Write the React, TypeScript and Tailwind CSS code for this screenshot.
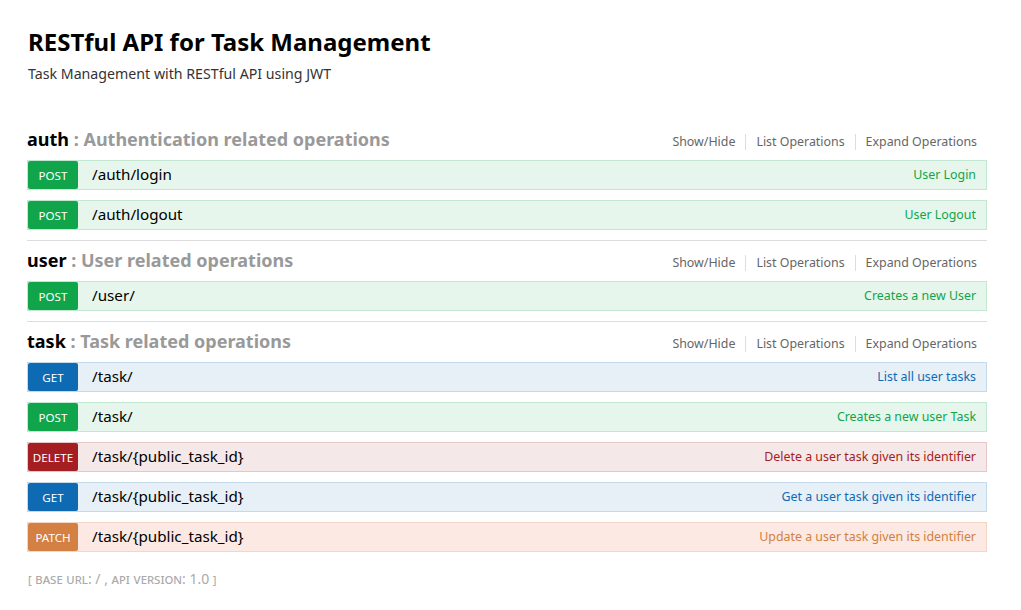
import clsx from 'clsx';

type Method = 'get' | 'post' | 'delete' | 'patch';

interface Operation {
  method: Method;
  path: string;
  summary: string;
}

interface Resource {
  name: string;
  description: string;
  operations: Operation[];
}

const resources: Resource[] = [
  {
    name: 'auth',
    description: 'Authentication related operations',
    operations: [
      { method: 'post', path: '/auth/login', summary: 'User Login' },
      { method: 'post', path: '/auth/logout', summary: 'User Logout' },
    ],
  },
  {
    name: 'user',
    description: 'User related operations',
    operations: [{ method: 'post', path: '/user/', summary: 'Creates a new User' }],
  },
  {
    name: 'task',
    description: 'Task related operations',
    operations: [
      { method: 'get', path: '/task/', summary: 'List all user tasks' },
      { method: 'post', path: '/task/', summary: 'Creates a new user Task' },
      { method: 'delete', path: '/task/{public_task_id}', summary: 'Delete a user task given its identifier' },
      { method: 'get', path: '/task/{public_task_id}', summary: 'Get a user task given its identifier' },
      { method: 'patch', path: '/task/{public_task_id}', summary: 'Update a user task given its identifier' },
    ],
  },
];

// swagger-ui 2.x method colours
const methodStyles: Record<Method, { row: string; badge: string; text: string }> = {
  get: { row: 'bg-[#e7f0f7] border-[#c3d9ec]', badge: 'bg-[#0f6ab4]', text: 'text-[#0f6ab4]' },
  post: { row: 'bg-[#e7f6ec] border-[#c3e8d1]', badge: 'bg-[#10a54a]', text: 'text-[#10a54a]' },
  delete: { row: 'bg-[#f5e8e8] border-[#e8c6c7]', badge: 'bg-[#a41e22]', text: 'text-[#a41e22]' },
  patch: { row: 'bg-[#fce9e3] border-[#f5d5c3]', badge: 'bg-[#d38042]', text: 'text-[#d38042]' },
};

function OperationRow({ op }: { op: Operation }) {
  const s = methodStyles[op.method];
  return (
    <div className={clsx('flex items-center h-[30px] border mb-[10px]', s.row)}>
      <span
        className={clsx(
          'w-[50px] h-[28px] rounded-[2px] flex items-center justify-center text-white text-[11.6px] uppercase pt-[1px]',
          s.badge
        )}
      >
        {op.method}
      </span>
      <span className="ml-[14px] text-[15.2px] text-black flex-1 pb-[2px]">{op.path}</span>
      <span className={clsx('mr-[10px] text-[12.4px]', s.text)}>{op.summary}</span>
    </div>
  );
}

function ResourceBlock({ resource, last }: { resource: Resource; last: boolean }) {
  return (
    <div className={clsx(!last && 'border-b border-[#ddd]')}>
      {/* Heading */}
      <div className="h-[40px] flex items-baseline pt-[6px]">
        <h2 className="text-[18px] font-bold leading-[26px] flex-1">
          <span className="text-black">{resource.name}</span>
          <span className="text-[#999]"> : {resource.description}</span>
        </h2>
        <ul className="flex items-baseline text-[12.4px] text-[#666] mr-[10px]">
          <li className="px-[10px] border-r border-[#ddd] leading-[16px]">Show/Hide</li>
          <li className="px-[10px] border-r border-[#ddd] leading-[16px]">List Operations</li>
          <li className="pl-[10px] leading-[16px]">Expand Operations</li>
        </ul>
      </div>
      <div>
        {resource.operations.map((op, i) => (
          <OperationRow key={i} op={op} />
        ))}
      </div>
    </div>
  );
}

export default function App() {
  return (
    <div
      className="min-h-screen bg-white pl-[27px] pt-[26px]"
      style={{ fontFamily: '"Noto Sans", "Open Sans", sans-serif' }}
    >
      <div className="w-[960px]">
        {/* Info */}
        <div className="pl-[1px]">
          <h1 className="text-[24px] font-bold leading-[32px] text-black">RESTful API for Task Management</h1>
          <p className="text-[14.2px] leading-[20px] text-[#333] mt-[6px]">
            Task Management with RESTful API using JWT
          </p>
        </div>

        {/* Resources */}
        <div className="mt-[36px]">
          {resources.map((r, i) => (
            <ResourceBlock key={r.name} resource={r} last={i === resources.length - 1} />
          ))}
        </div>

        {/* Footer */}
        <div className="pt-[6px] pl-[1px]">
          <h4 className="text-[14px] text-[#aaa] [font-variant:small-caps]">
            [ base url: / , api version: 1.0 ]
          </h4>
        </div>
      </div>
    </div>
  );
}
